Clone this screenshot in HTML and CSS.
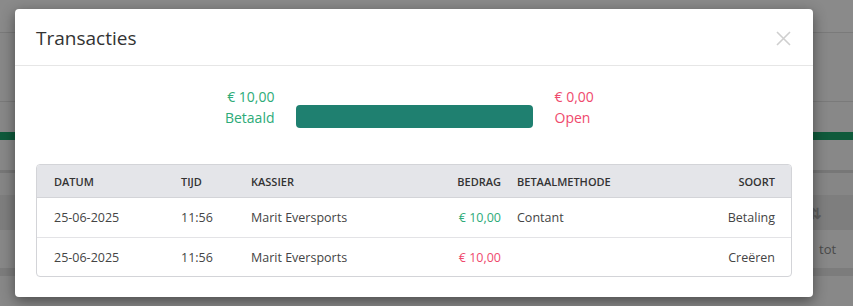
FILE: index.html
```html
<!DOCTYPE html>
<html lang="nl">
<head>
  <meta charset="UTF-8">
  <meta name="viewport" content="width=device-width, initial-scale=1.0">
  <title>Transacties</title>
  <link rel="stylesheet" href="styles.css">
</head>
<body>

  <!-- Page behind the overlay -->
  <div class="backdrop">
    <div class="bg-top"></div>
    <div class="bg-block"></div>
    <div class="bg-strip"></div>
    <div class="bg-green"></div>
    <div class="bg-gap"></div>
    <div class="bg-band"></div>
    <div class="bg-gap2"></div>
    <div class="bg-head"><span class="bg-sort">&#8645;</span></div>
    <div class="bg-row"><span class="bg-text">tot</span></div>
    <div class="bg-band2"></div>
  </div>

  <!-- Modal -->
  <div class="modal">
    <div class="modal-header">
      <h2>Transacties</h2>
      <button class="close-btn" aria-label="Sluiten">
        <svg width="15" height="15" viewBox="0 0 15 15">
          <path d="M1 1 L14 14 M14 1 L1 14" stroke="#cfcfcf" stroke-width="1.6" fill="none"/>
        </svg>
      </button>
    </div>

    <div class="modal-body">
      <div class="summary">
        <div class="sum-paid">
          <div>&euro; 10,00</div>
          <div>Betaald</div>
        </div>
        <div class="progress"><div class="progress-fill"></div></div>
        <div class="sum-open">
          <div>&euro; 0,00</div>
          <div>Open</div>
        </div>
      </div>

      <div class="tx-table">
        <div class="tx-row tx-head">
          <div class="c1">Datum</div>
          <div>Tijd</div>
          <div>Kassier</div>
          <div class="right">Bedrag</div>
          <div>Betaalmethode</div>
          <div class="right last">Soort</div>
        </div>
        <div class="tx-row">
          <div class="c1">25-06-2025</div>
          <div>11:56</div>
          <div>Marit Eversports</div>
          <div class="right paid">&euro; 10,00</div>
          <div>Contant</div>
          <div class="right last">Betaling</div>
        </div>
        <div class="tx-row">
          <div class="c1">25-06-2025</div>
          <div>11:56</div>
          <div>Marit Eversports</div>
          <div class="right due">&euro; 10,00</div>
          <div></div>
          <div class="right last">Cre&euml;ren</div>
        </div>
      </div>
    </div>
  </div>

</body>
</html>
```

FILE: styles.css
```css
/* Basic Reset */
* {
  margin: 0;
  padding: 0;
  box-sizing: border-box;
}

body {
  font-family: 'Open Sans', 'Liberation Sans', sans-serif;
  color: #333;
  background-color: #888;
  width: 853px;
  height: 306px;
  overflow: hidden;
  position: relative;
}

/* Dimmed page behind the modal */
.backdrop {
  display: flex;
  flex-direction: column;
}

.bg-top {
  height: 33px;
  background-color: #8a8a8a;
  border-bottom: 1px solid #7a7a7a;
}

.bg-block {
  height: 69px;
  background-color: #888;
  border-bottom: 1px solid #7a7a7a;
}

.bg-strip {
  height: 30px;
  background-color: #888;
}

.bg-green {
  height: 8px;
  background-color: #0f5a3b;
}

.bg-gap {
  height: 30px;
  background-color: #888;
}

.bg-band {
  height: 3px;
  background-color: #777;
}

.bg-gap2 {
  height: 22px;
  background-color: #868686;
}

.bg-head {
  height: 35px;
  background-color: #7e7e7e;
  display: flex;
  align-items: center;
  padding-left: 809px;
}

.bg-sort {
  color: #5e5e5e;
  font-size: 15px;
  font-weight: 700;
}

.bg-row {
  height: 38px;
  background-color: #888;
  display: flex;
  align-items: center;
  padding-left: 819px;
}

.bg-text {
  color: #4a4a4a;
  font-size: 13px;
}

.bg-band2 {
  height: 8px;
  background-color: #7c7c7c;
}

/* Modal */
.modal {
  position: absolute;
  top: 9px;
  left: 15px;
  width: 798px;
  height: 288px;
  background-color: #fff;
  border-radius: 4px;
  box-shadow: 0 4px 14px rgba(0, 0, 0, 0.45);
}

.modal-header {
  height: 57px;
  display: flex;
  justify-content: space-between;
  align-items: center;
  padding: 2px 22px 0 21px;
  border-bottom: 1px solid #e6e6e6;
}

.modal-header h2 {
  font-size: 19px;
  font-weight: 400;
  color: #333;
}

.close-btn {
  background: none;
  border: none;
  display: flex;
  cursor: pointer;
}

.modal-body {
  padding: 20px 21px 0;
}

/* Paid / open summary */
.summary {
  display: grid;
  grid-template-columns: 1fr 237px 1fr;
  column-gap: 21px;
  align-items: end;
  font-size: 14px;
  line-height: 21px;
}

.sum-paid {
  text-align: right;
  color: #2dab78;
}

.sum-open {
  color: #ef4a6d;
  padding-left: 1px;
}

.progress {
  height: 23px;
  background-color: #eee;
  border-radius: 4px;
  overflow: hidden;
}

.progress-fill {
  width: 100%;
  height: 100%;
  background-color: #1f8070;
}

/* Transactions table */
.tx-table {
  margin-top: 36px;
  border: 1px solid #d3d4d8;
  border-radius: 4px;
  overflow: hidden;
}

.tx-row {
  display: grid;
  grid-template-columns: 136px 70px 175px 91px 148px 1fr;
  align-items: center;
  height: 39px;
  font-size: 12.5px;
  color: #444;
  border-top: 1px solid #e3e3e6;
}

.tx-row > div {
  padding: 0 8px;
  white-space: nowrap;
}

.tx-row .c1 {
  padding-left: 17px;
}

.tx-row .right {
  text-align: right;
}

.tx-row .last {
  padding-right: 16px;
}

.tx-head {
  height: 33px;
  border-top: none;
  border-bottom: 1px solid #d3d4d8;
  background-color: #e4e5e9;
  font-size: 11px;
  font-weight: 600;
  text-transform: uppercase;
  color: #333;
}

.tx-head + .tx-row {
  border-top: none;
}

.paid {
  color: #2dab78;
}

.due {
  color: #ef4a6d;
}
```
